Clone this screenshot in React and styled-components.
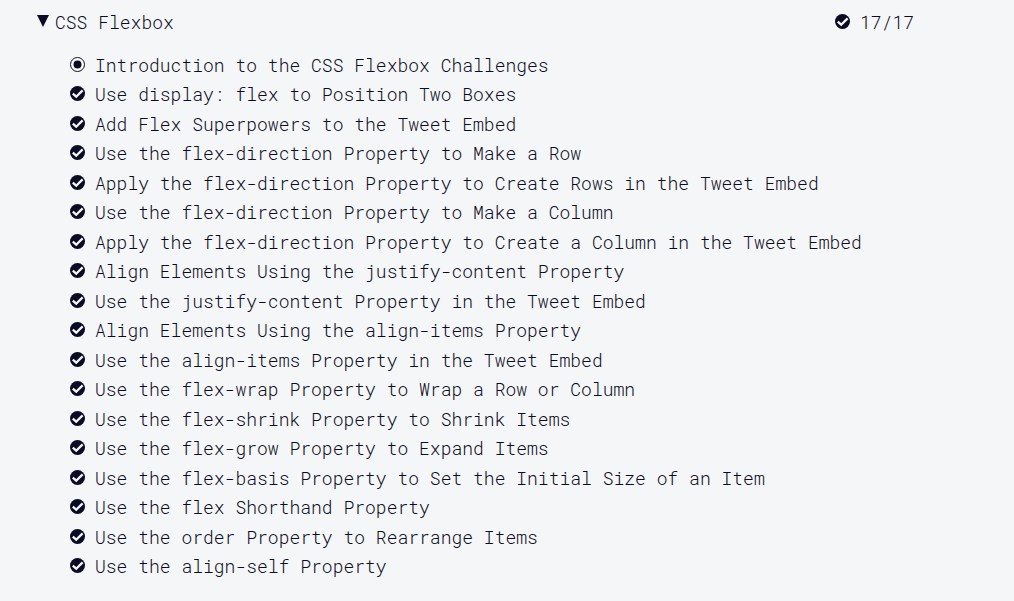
import React, { useState } from "react";
import styled, { createGlobalStyle } from "styled-components";

const ink = "#0a0a23";
const paper = "#f5f6f7";

const GlobalStyle = createGlobalStyle`
  body {
    margin: 0;
    background: ${paper};
    color: ${ink};
    font-family: "Roboto Mono", "Liberation Mono", monospace;
    font-size: 18px;
    font-weight: 350;
    line-height: 29px;
  }
`;

const Block = styled.main`
  padding: 8px 100px 20px 37px;
`;

const Heading = styled.h1`
  margin: 0;
  font: inherit;
`;

const Toggle = styled.button`
  display: flex;
  align-items: flex-start;
  width: 100%;
  padding: 0;
  border: 0;
  background: none;
  color: inherit;
  font: inherit;
  text-align: left;
  cursor: pointer;
`;

const Title = styled.span`
  flex: 1;
  margin-left: 6px;
`;

const Count = styled.span`
  display: flex;
  align-items: flex-start;
  gap: 10px;
`;

const Icon = styled.svg`
  flex: none;
  display: block;
  margin-top: 6px;
`;

const Arrow = styled(Icon)`
  margin-top: 7px;
  transform: ${(p) => (p.$open ? "none" : "rotate(-90deg)")};
`;

const List = styled.ul`
  margin: 14px 0 0;
  padding: 0 0 0 33px;
  list-style: none;
`;

const Item = styled.li`
  min-height: 29px;

  &:nth-child(even) {
    min-height: 30px;
  }
`;

const Challenge = styled.a`
  display: flex;
  align-items: flex-start;
  gap: 10px;
  color: inherit;
  text-decoration: none;
`;

const challenges = [
  "Introduction to the CSS Flexbox Challenges",
  "Use display: flex to Position Two Boxes",
  "Add Flex Superpowers to the Tweet Embed",
  "Use the flex-direction Property to Make a Row",
  "Apply the flex-direction Property to Create Rows in the Tweet Embed",
  "Use the flex-direction Property to Make a Column",
  "Apply the flex-direction Property to Create a Column in the Tweet Embed",
  "Align Elements Using the justify-content Property",
  "Use the justify-content Property in the Tweet Embed",
  "Align Elements Using the align-items Property",
  "Use the align-items Property in the Tweet Embed",
  "Use the flex-wrap Property to Wrap a Row or Column",
  "Use the flex-shrink Property to Shrink Items",
  "Use the flex-grow Property to Expand Items",
  "Use the flex-basis Property to Set the Initial Size of an Item",
  "Use the flex Shorthand Property",
  "Use the order Property to Rearrange Items",
  "Use the align-self Property",
];

const slug = (name) => name.toLowerCase().replace(/[^a-z]+/g, "-");

function PassedIcon() {
  return (
    <Icon width="15" height="15" viewBox="0 0 15 15" aria-hidden="true">
      <circle cx="7.5" cy="7.5" r="7.5" fill={ink} />
      <path d="M2.8 7.6 L6.2 10.7 L12.6 4.4" fill="none" stroke={paper} strokeWidth="2.3" />
    </Icon>
  );
}

function IntroIcon() {
  return (
    <Icon width="15" height="15" viewBox="0 0 15 15" aria-hidden="true">
      <circle cx="7.5" cy="7.5" r="7" fill="#fff" stroke={ink} />
      <circle cx="7.5" cy="7.5" r="4" fill={ink} />
    </Icon>
  );
}

export default function App() {
  const [open, setOpen] = useState(true);

  return (
    <>
      <GlobalStyle />
      <Block>
        <Heading>
          <Toggle type="button" aria-expanded={open} onClick={() => setOpen(!open)}>
            <Arrow $open={open} width="12" height="12" viewBox="0 0 12 12" aria-hidden="true">
              <path d="M0 0 H12 L6 12 Z" fill={ink} />
            </Arrow>
            <Title>CSS Flexbox</Title>
            <Count>
              <PassedIcon />
              <span>17/17</span>
            </Count>
          </Toggle>
        </Heading>
        {open && (
          <List>
            {challenges.map((name, i) => (
              <Item key={name}>
                <Challenge href={`#${slug(name)}`}>
                  {i === 0 ? <IntroIcon /> : <PassedIcon />}
                  <span>{name}</span>
                </Challenge>
              </Item>
            ))}
          </List>
        )}
      </Block>
    </>
  );
}
